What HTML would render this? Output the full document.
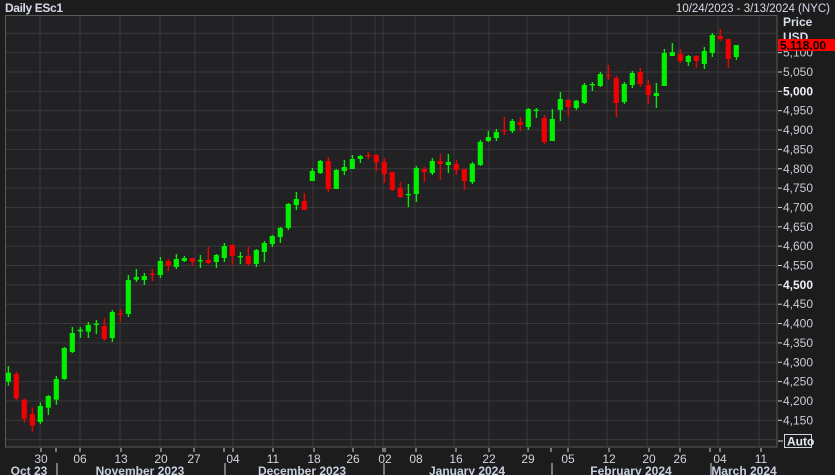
<!DOCTYPE html>
<html><head><meta charset="utf-8"><style>
html,body{margin:0;padding:0;background:#1c1c1c;width:835px;height:475px;overflow:hidden;font-family:"Liberation Sans",sans-serif}
svg text{font-family:"Liberation Sans",sans-serif}
</style></head><body>
<svg id="s" width="835" height="475" xmlns="http://www.w3.org/2000/svg">
<rect width="835" height="475" fill="#1c1c1c"/>
<rect x="5" y="15" width="772" height="432" fill="#222224"/>
<g id="grid"></g>
<g id="candles"></g>
<rect x="5.5" y="15.5" width="771.5" height="431.5" fill="none" stroke="#5a5a5a"/>
<text x="5" y="12" font-size="12" font-weight="bold" fill="#d6dbe8" textLength="58">Daily ESc1</text>
<text x="830" y="12" font-size="11.5" fill="#d6dbe8" text-anchor="end">10/24/2023 - 3/13/2024 (NYC)</text>
<text x="783" y="26" font-size="12" font-weight="bold" fill="#d6dbe8">Price</text>
<text x="783" y="41" font-size="12" font-weight="bold" fill="#d6dbe8">USD</text>
<g id="axis"></g>
<rect x="778" y="39" width="57" height="12" fill="#ff0000"/>
<text x="780" y="49.5" font-size="12" font-weight="bold" fill="#000">5,118.00</text>
<line x1="778" y1="441" x2="783" y2="441" stroke="#cfd4de"/>
<rect x="784.5" y="434.5" width="27" height="13" fill="#1c1c1c" stroke="#cfd4de"/>
<text x="787" y="445.5" font-size="12" font-weight="bold" fill="#e6e9f0">Auto</text>
</svg>
<script>
var NS="http://www.w3.org/2000/svg";
function el(p,t,a,txt){var e=document.createElementNS(NS,t);for(var k in a)e.setAttribute(k,a[k]);if(txt!==undefined)e.textContent=txt;document.getElementById(p).appendChild(e);return e;}
// horizontal grid
for(var k=0;k<=21;k++){var y=33.3+k*19.35;el('grid','line',{x1:5,x2:777,y1:y,y2:y,stroke:'#3a3a3c','stroke-width':1});
 if(k>=1&&k<=20){var p=5150-50*k;var s=(p/1000|0)+','+('00'+(p%1000)).slice(-3);var b=(p==5000||p==4500);
  el('axis','line',{x1:778,x2:782,y1:y,y2:y,stroke:'#cfd4de'});
  el('axis','text',{x:783,y:y+4,'font-size':12,fill:b?'#eef0f5':'#c8ccd6','font-weight':b?'bold':'normal'},s);}}
var vx=[40,80,120,160,195,233,273,313,351,375,383,415,454,489,527,569,607,647,679,718,759];
vx.forEach(function(x){el('grid','line',{x1:x,x2:x,y1:15,y2:447,stroke:'#3a3a3c'});});
// date labels
var d=[[41,'30'],[80,'06'],[121,'13'],[161,'20'],[194,'27'],[233,'04'],[273,'11'],[314,'18'],[353,'26'],[385,'02'],[416,'08'],[456,'16'],[489,'22'],[528,'29'],[568,'05'],[609,'12'],[649,'20'],[680,'26'],[720,'04'],[761,'11']];
d.forEach(function(a){el('axis','line',{x1:a[0],x2:a[0],y1:448,y2:452,stroke:'#cfd4de'});el('axis','text',{x:a[0],y:463,'font-size':12,fill:'#cfd4de','text-anchor':'middle'},a[1]);});
var m=[[29,'Oct 23'],[140,'November 2023'],[302,'December 2023'],[467,'January 2024'],[631,'February 2024'],[744,'March 2024']];
m.forEach(function(a){el('axis','text',{x:a[0],y:475,'font-size':12,'font-weight':'bold',fill:'#c8d0e0','text-anchor':'middle'},a[1]);});
[57,225,384,552,711].forEach(function(x){el('axis','line',{x1:x,x2:x,y1:463,y2:475,stroke:'#cfd4de'});el('axis','line',{x1:x-1,x2:x-1,y1:448,y2:452,stroke:'#cfd4de'});});
// candles set A (zoom3: y=150+z/3)
var A=[['G',668,695,648,707],['R',672,745,665,750],['R',749,806,745,818],['R',792,827,772,845],['G',768,816,757,822],['G',738,773,735,795],['G',687,749,678,764],['G',594,687,591,690],['G',549,606,531,609],['G',539,544,531,564],['G',525,545,516,564],['G',521,524,510,552],['R',528,567,504,573],['G',486,564,480,576],['R',490,494,477,516],['G',390,492,375,501],['G',381,389,357,396],['G',378,390,369,405],['R',371,374,357,393],['G',333,375,321,384],['R',333,347,327,363],['G',327,351,312,357],['G',324,333,318,336],['R',324,335,324,348],['G',330,334,315,354],['R',330,339,291,342],['G',315,336,312,354],['G',288,324,279,336],['R',285,318,282,345],['G',318,320,306,342],['R',318,342,291,348],['G',300,342,297,351],['G',279,306,273,336],['G',258,282,255,291],['G',234,261,231,279],['G',162,234,159,240],['G',147,165,126,180],['R',153,180,129,180],['G',63,93,54,93],['G',33,69,30,72],['R',33,117,21,126],['G',60,117,57,117],['G',51,63,30,75],['G',27,57,15,57],['G',18,27,15,39],['R',15,18,6,27],['R',15,36,12,63],['R',36,72,24,99],['R',66,120,66,123],['R',114,141,96,144],['G',132,135,102,171],['G',54,132,48,156]];
var B=[['R',447,456,441,486],['G',423,459,414,465],['R',423,432,402,480],['G',426,435,402,459],['R',432,450,420,465],['R',447,483,447,510],['G',431,486,426,492],['G',366,435,360,438],['G',351,363,333,366],['G',336,354,327,363],['R',330,333,291,345],['G',303,333,297,339],['R',306,315,291,333],['G',267,321,264,330],['G',269,273,264,294],['R',294,366,285,372],['G',297,363,267,363],['G',237,270,216,303],['R',240,261,237,288],['G',242,264,240,270],['G',195,249,189,252],['G',192,196,186,213],['G',162,198,156,201],['R',165,168,135,180],['R',174,249,168,291],['G',192,246,186,252],['G',159,195,153,204],['R',156,192,144,201],['R',195,225,180,252],['G',219,228,189,264],['G',99,198,87,198],['G',96,108,69,108],['R',102,123,87,129],['G',108,126,105,138],['R',108,123,105,144],['G',93,132,81,147],['G',45,99,39,111],['R',48,57,27,63],['R',57,117,57,144],['G',75,111,75,120]];
function draw(c,i,off){var x=8.3+8*i;var col=c[0]=='G'?'#00f000':'#f00000';
 var bt=off+c[1]/3,bb=off+c[2]/3,wt=off+c[3]/3,wb=off+c[4]/3;
 el('candles','rect',{x:x-0.6,y:wt,width:1.4,height:Math.max(wb-wt,1),fill:col});
 el('candles','rect',{x:x-2.6,y:bt,width:5.2,height:Math.max(bb-bt,1.3),fill:col});}
A.forEach(function(c,i){draw(c,i,150);});
B.forEach(function(c,i){draw(c,52+i,20);});
</script>
</body></html>
